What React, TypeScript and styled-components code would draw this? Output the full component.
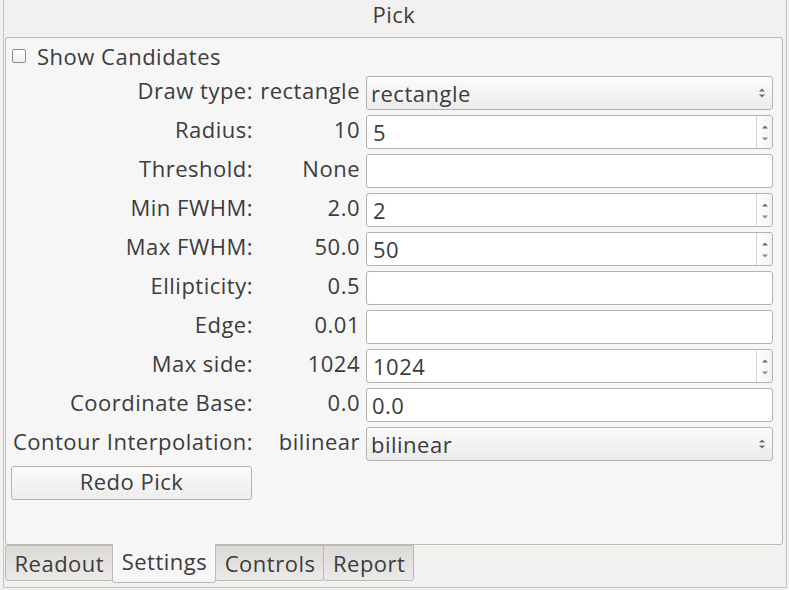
import styled, { createGlobalStyle } from "styled-components";

const GlobalStyle = createGlobalStyle`
    html, body {
        margin: 0;
        padding: 0;
        background: #f2f1f0;
    }

    body {
        font-family: "Open Sans", "DejaVu Sans", sans-serif;
        font-size: 22px;
        letter-spacing: 0.5px;
        color: #3c3c3c;
    }
`;

type Field = {
    label: string;
    value: string;
    kind: "combo" | "spin" | "text";
    content?: string;
};

const fields: Field[] = [
    { label: "Draw type:", value: "rectangle", kind: "combo", content: "rectangle" },
    { label: "Radius:", value: "10", kind: "spin", content: "5" },
    { label: "Threshold:", value: "None", kind: "text" },
    { label: "Min FWHM:", value: "2.0", kind: "spin", content: "2" },
    { label: "Max FWHM:", value: "50.0", kind: "spin", content: "50" },
    { label: "Ellipticity:", value: "0.5", kind: "text" },
    { label: "Edge:", value: "0.01", kind: "text" },
    { label: "Max side:", value: "1024", kind: "spin", content: "1024" },
    { label: "Coordinate Base:", value: "0.0", kind: "text", content: "0.0" },
    { label: "Contour Interpolation:", value: "bilinear", kind: "combo", content: "bilinear" },
];

const tabs = ["Readout", "Settings", "Controls", "Report"];

function ComboArrows() {
    return <svg width="8" height="12" viewBox="0 0 8 12">
        <path d="M1 4.5 L4 1.5 L7 4.5 Z" fill="#6a6a6a" />
        <path d="M1 7.5 L4 10.5 L7 7.5 Z" fill="#6a6a6a" />
    </svg>;
}

function SpinArrow({ down }: { down?: boolean }) {
    return <svg width="6" height="4" viewBox="0 0 6 4">
        {down
            ? <path d="M0 0.5 L3 3.5 L6 0.5 Z" fill="#8a8a8a" />
            : <path d="M0 3.5 L3 0.5 L6 3.5 Z" fill="#6a6a6a" />}
    </svg>;
}

function Control({ field }: { field: Field }) {
    if (field.kind === "combo") {
        return <Combo>
            <span>{field.content}</span>
            <ComboArrows />
        </Combo>;
    }
    if (field.kind === "spin") {
        return <Spin>
            <span>{field.content}</span>
            <SpinButtons>
                <SpinArrow />
                <SpinArrow down />
            </SpinButtons>
        </Spin>;
    }
    return <TextBox>{field.content}</TextBox>;
}

export default function App() {
    return <>
        <GlobalStyle />
        <Window>
            <Pane>
                <Title>Pick</Title>
                <Group>
                    <CheckRow>
                        <CheckBox />
                        <span>Show Candidates</span>
                    </CheckRow>
                    <Form>
                        {fields.map((f) => <FormRow key={f.label}>
                            <Label>{f.label}</Label>
                            <Value>{f.value}</Value>
                            <Control field={f} />
                        </FormRow>)}
                    </Form>
                    <Button>Redo Pick</Button>
                </Group>
                <TabBar>
                    {tabs.map((t) => <Tab key={t} $active={t === "Settings"}>{t}</Tab>)}
                </TabBar>
            </Pane>
        </Window>
    </>;
}

const Window = styled.div`
    width: 789px;
    height: 590px;
    box-sizing: border-box;
    padding: 0 2px 2px 3px;
    overflow: hidden;
`;

const Pane = styled.div`
    height: 100%;
    box-sizing: border-box;
    border-left: 1px solid #c8c6c2;
    border-right: 1px solid #c8c6c2;
    border-bottom: 1px solid #c8c6c2;
    padding: 0 3px 0 1px;
    display: flex;
    flex-direction: column;
    position: relative;

    &::after {
        content: "";
        position: absolute;
        top: 0;
        bottom: 0;
        right: -5px;
        width: 1px;
        background: #c8c6c2;
    }
`;

const Title = styled.div`
    height: 37px;
    line-height: 28px;
    text-align: center;
`;

const Group = styled.div`
    height: 508px;
    box-sizing: border-box;
    background: #f6f6f6;
    border: 1px solid #bcbab5;
    border-radius: 3px;
    padding: 6px 3px 0 4px;
    display: flex;
    flex-direction: column;
`;

const CheckRow = styled.div`
    display: flex;
    align-items: center;
    height: 26px;
    margin-bottom: 6px;
    margin-top: -1px;

    span {
        margin-left: 11px;
    }
`;

const CheckBox = styled.div`
    width: 12px;
    height: 12px;
    margin-left: 2px;
    border: 1px solid #8e8c88;
    border-radius: 2px;
    background: linear-gradient(#ffffff, #f0f0f0);
`;

const Form = styled.div`
    display: flex;
    flex-direction: column;
    gap: 5px;
    margin-top: 1px;
`;

const FormRow = styled.div`
    display: grid;
    grid-template-columns: 243px 102px 408px;
    column-gap: 5px;
    height: 34px;
    align-items: center;
`;

const Label = styled.div`
    text-align: right;
    white-space: nowrap;
    margin-top: -6px;
`;

const Value = styled.div`
    text-align: right;
    white-space: nowrap;
    margin-top: -6px;
`;

const fieldBase = `
    height: 34px;
    box-sizing: border-box;
    border: 1px solid #b4b2ad;
    border-radius: 3px;
    display: flex;
    align-items: center;
    color: #3c3c3c;
    margin-left: 1px;
`;

const Combo = styled.div`
    ${fieldBase}
    justify-content: space-between;
    padding: 0 6px 0 4px;
    background: linear-gradient(#fbfbfb, #ebebeb);
    box-shadow: inset 0 1px 0 #ffffff;
`;

const Spin = styled.div`
    ${fieldBase}
    background: #ffffff;
    padding-left: 6px;

    span {
        flex: 1;
    }
`;

const SpinButtons = styled.div`
    width: 16px;
    height: 100%;
    border-left: 1px solid #d6d4d0;
    background: linear-gradient(90deg, #ffffff, #f2f2f2);
    border-radius: 0 3px 3px 0;
    display: flex;
    flex-direction: column;
    align-items: center;
    justify-content: space-between;
    padding: 9px 0 7px;
    box-sizing: border-box;
`;

const TextBox = styled.div`
    ${fieldBase}
    background: #ffffff;
    padding-left: 5px;
`;

const Button = styled.div`
    margin-top: 5px;
    width: 241px;
    height: 34px;
    box-sizing: border-box;
    margin-left: 1px;
    border: 1px solid #b4b2ad;
    border-radius: 3px;
    background: linear-gradient(#fbfbfb, #ececec);
    display: flex;
    align-items: center;
    justify-content: center;
    padding-bottom: 4px;
`;

const TabBar = styled.div`
    display: flex;
    align-items: flex-start;
    margin-top: -1px;
`;

const Tab = styled.div<{ $active?: boolean }>`
    box-sizing: border-box;
    height: ${(p) => (p.$active ? "39px" : "36px")};
    margin-top: ${(p) => (p.$active ? "0" : "1px")};
    padding: 0 8px 0 8.5px;
    line-height: 34px;
    border: 1px solid #bcbab5;
    border-top: ${(p) => (p.$active ? "none" : "1px solid #bcbab5")};
    border-radius: 0 0 3px 3px;
    background: ${(p) => (p.$active ? "#f6f6f6" : "linear-gradient(#dcdad7, #eceae8)")};
    color: #3c3c3c;
    margin-right: -1px;
`;
